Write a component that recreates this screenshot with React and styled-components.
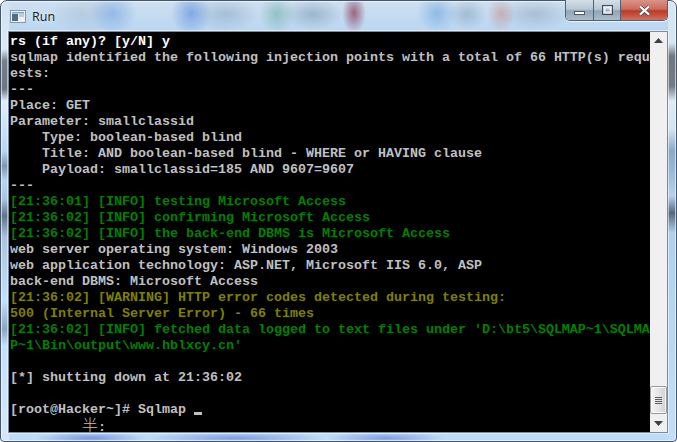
import React from "react";
import styled, { createGlobalStyle } from "styled-components";

const Global = createGlobalStyle`
  html, body {
    margin: 0;
    padding: 0;
    background: #fff;
    overflow: hidden;
  }
`;

// the desktop showing through the glass is only a few blurred smudges
const titleSmudges = `
  radial-gradient(ellipse 34px 20px at 82px 13px, rgba(120, 140, 160, 0.2), transparent),
  radial-gradient(ellipse 24px 22px at 112px 12px, rgba(80, 140, 215, 0.42), transparent),
  radial-gradient(ellipse 20px 24px at 190px 12px, rgba(60, 120, 215, 0.5), transparent),
  radial-gradient(ellipse 34px 18px at 224px 13px, rgba(110, 140, 170, 0.36), transparent),
  radial-gradient(ellipse 18px 20px at 276px 13px, rgba(90, 165, 150, 0.48), transparent),
  radial-gradient(ellipse 30px 16px at 312px 13px, rgba(100, 130, 155, 0.42), transparent),
  radial-gradient(ellipse 12px 20px at 353px 12px, rgba(130, 40, 70, 0.66), transparent),
  radial-gradient(ellipse 20px 20px at 436px 12px, rgba(70, 140, 210, 0.42), transparent),
  radial-gradient(ellipse 20px 16px at 466px 13px, rgba(100, 130, 160, 0.36), transparent),
  radial-gradient(ellipse 14px 18px at 500px 13px, rgba(200, 110, 90, 0.4), transparent),
  radial-gradient(ellipse 36px 16px at 534px 13px, rgba(110, 130, 150, 0.32), transparent)
`;

const bottomSmudges = `
  radial-gradient(ellipse 56px 6px at 90px 437px, rgba(70, 95, 205, 0.55), transparent),
  radial-gradient(ellipse 90px 6px at 235px 437px, rgba(70, 95, 205, 0.5), transparent),
  radial-gradient(ellipse 60px 6px at 385px 437px, rgba(70, 95, 205, 0.5), transparent)
`;

const leftStrip = `linear-gradient(180deg,
  #cfe2f5 0, #dce9f5 48px, #77808a 60px, #6f7880 88px, #e2eefa 100px, #b5d6f5 150px,
  #7f97ad 165px, #b8d6f3 180px, #a9c6e0 198px, #5f7488 215px, #a8c4de 236px,
  #c4e0fa 300px, #8ba6c0 328px, #c4e0fa 345px, #d5e8fa 442px)`;

const rightStrip = `linear-gradient(180deg,
  #d5e6f6 0, #d8e6f3 42px, #6f767c 55px, #747b82 85px, #dfeaf5 100px, #d5e4f2 128px,
  #8aa8c8 150px, #9ab8d8 170px, #b4d2f0 195px, #56697c 212px, #b0d0f0 232px, #c2defa 442px)`;

const Frame = styled.div`
  width: 677px;
  height: 442px;
  box-sizing: border-box;
  display: flex;
  flex-direction: column;
  padding: 0 8px 8px 7px;
  border: 1px solid #47566a;
  border-radius: 7px 7px 4px 4px;
  box-shadow: inset 0 0 0 1px rgba(255, 255, 255, 0.6);
  background:
    ${bottomSmudges},
    ${titleSmudges},
    ${leftStrip} 0 0 / 8px 100% no-repeat,
    ${rightStrip} 100% 0 / 8px 100% no-repeat,
    linear-gradient(180deg, #cfe0f0 0, #b9d6f2 30px, #bcdcfa 100%);
`;

const TitleBar = styled.div`
  height: 30px;
  flex: none;
  display: flex;
  align-items: center;
  position: relative;
`;

const AppIcon = styled.svg`
  width: 16px;
  height: 16px;
  margin: 2px 6px 0 2px;
  flex: none;
`;

const Title = styled.span`
  font: 12.5px "Open Sans", "Liberation Sans", sans-serif;
  color: #16212c;
  margin-top: 1px;
  text-shadow: 0 0 6px rgba(255, 255, 255, 0.9);
`;

const Controls = styled.div`
  position: absolute;
  top: -1px;
  right: 0;
  display: flex;
  height: 20px;
  border: 1px solid #54606d;
  border-top: none;
  border-radius: 0 0 5px 5px;
  overflow: hidden;
  box-shadow: 0 1px 0 rgba(255, 255, 255, 0.7);
`;

const ControlButton = styled.div`
  width: ${(p) => p.$w}px;
  display: flex;
  align-items: center;
  justify-content: center;
  border-left: ${(p) => (p.$first ? "none" : "1px solid #54606d")};
  background: ${(p) =>
    p.$close
      ? "linear-gradient(180deg, #d9948a 0, #cf6a5a 45%, #bb3a28 55%, #d0705c 100%)"
      : "linear-gradient(180deg, #d4dfe9 0, #b9c8d6 45%, #93a6b8 55%, #a9bccd 100%)"};
`;

const MinimizeGlyph = styled.svg`
  margin-top: 5px;
`;

const Body = styled.div`
  flex: 1;
  min-height: 0;
  display: flex;
  border: 1px solid #7d8c9b;
  outline: 1px solid rgba(255, 255, 255, 0.5);
`;

const Console = styled.div`
  flex: 1;
  min-width: 0;
  background: #000;
  padding: 2px 0 0 1px;
  overflow: hidden;
  font-family: "Liberation Mono", "Courier New", monospace;
  font-size: 13.33px;
  font-weight: 700;
  line-height: 16px;
  white-space: pre;
`;

const toneColors = {
  green: "#008000",
  yellow: "#808000",
  white: "#fff",
};

const Line = styled.div`
  height: 16px;
  color: ${(p) => toneColors[p.$tone] || "#c0c0c0"};
`;

const LastLine = styled(Line)`
  height: 14px;
  line-height: 12px;
`;

const Cjk = styled.span`
  display: inline-block;
  height: 12px;
  font-family: "Noto Sans CJK SC", sans-serif;
  font-size: 16px;
  line-height: 12px;
  font-weight: 300;
`;

const Cursor = styled.span`
  display: inline-block;
  width: 8px;
  height: 3px;
  margin-left: 8px;
  background: #c0c0c0;
  vertical-align: -2px;
`;

const ScrollBar = styled.div`
  width: 17px;
  flex: none;
  display: flex;
  flex-direction: column;
  background: #f0f0f0;
`;

const ArrowCell = styled.div`
  height: 17px;
  display: flex;
  align-items: center;
  justify-content: center;
`;

const Track = styled.div`
  flex: 1;
  display: flex;
  flex-direction: column;
  justify-content: flex-end;
`;

const Thumb = styled.div`
  height: 28px;
  box-sizing: border-box;
  margin-bottom: 1px;
  border: 1px solid #9a9a9a;
  border-radius: 2px;
  background: linear-gradient(90deg, #f4f4f4 0, #e6e6e6 50%, #cfcfcf 100%);
  box-shadow: inset 0 0 0 1px rgba(255, 255, 255, 0.8);
  display: flex;
  flex-direction: column;
  align-items: center;
  justify-content: center;
  gap: 1px;
`;

const Grip = styled.i`
  display: block;
  width: 7px;
  height: 1px;
  background: #5f5f5f;
`;

const lines = [
  ["white", "rs (if any)? [y/N] y"],
  ["", "sqlmap identified the following injection points with a total of 66 HTTP(s) requ"],
  ["", "ests:"],
  ["", "---"],
  ["", "Place: GET"],
  ["", "Parameter: smallclassid"],
  ["", "    Type: boolean-based blind"],
  ["", "    Title: AND boolean-based blind - WHERE or HAVING clause"],
  ["", "    Payload: smallclassid=185 AND 9607=9607"],
  ["", "---"],
  ["green", "[21:36:01] [INFO] testing Microsoft Access"],
  ["green", "[21:36:02] [INFO] confirming Microsoft Access"],
  ["green", "[21:36:02] [INFO] the back-end DBMS is Microsoft Access"],
  ["", "web server operating system: Windows 2003"],
  ["", "web application technology: ASP.NET, Microsoft IIS 6.0, ASP"],
  ["", "back-end DBMS: Microsoft Access"],
  ["yellow", "[21:36:02] [WARNING] HTTP error codes detected during testing:"],
  ["yellow", "500 (Internal Server Error) - 66 times"],
  ["green", "[21:36:02] [INFO] fetched data logged to text files under 'D:\\bt5\\SQLMAP~1\\SQLMA"],
  ["green", "P~1\\Bin\\output\\www.hblxcy.cn'"],
  ["", ""],
  ["", "[*] shutting down at 21:36:02"],
  ["", ""],
];

const App = () => {
  return (
    <>
      <Global />
      <Frame>
        <TitleBar>
          <AppIcon viewBox="0 0 16 16">
            <rect x="0.5" y="1.5" width="15" height="12" fill="#eef2f6" stroke="#8a96a2" />
            <rect x="2" y="3" width="12" height="1.5" fill="#7fa3c8" />
            <rect x="2" y="5" width="6" height="7" fill="#4d7080" />
            <rect x="9" y="5" width="5" height="3" fill="#c2ccd6" />
          </AppIcon>
          <Title>Run</Title>
          <Controls>
            <ControlButton $w={27} $first>
              <MinimizeGlyph width="11" height="4" viewBox="0 0 11 4">
                <rect x="0.5" y="0.5" width="10" height="3" fill="#fff" stroke="#4f5a66" />
              </MinimizeGlyph>
            </ControlButton>
            <ControlButton $w={26}>
              <svg width="11" height="10" viewBox="0 0 11 10">
                <rect x="0.5" y="0.5" width="10" height="9" fill="none" stroke="#3f4a56" />
                <rect x="2.5" y="2.5" width="6" height="5" fill="none" stroke="#e8eef4" strokeWidth="2" />
              </svg>
            </ControlButton>
            <ControlButton $w={46} $close>
              <svg width="13" height="11" viewBox="0 0 13 11">
                <path d="M2 1.5 L11 9.5 M11 1.5 L2 9.5" stroke="#4a4f55" strokeWidth="3.6" />
                <path d="M2 1.5 L11 9.5 M11 1.5 L2 9.5" stroke="#fff" strokeWidth="2.2" />
              </svg>
            </ControlButton>
          </Controls>
        </TitleBar>
        <Body>
          <Console>
            {lines.map((l, i) => (
              <Line key={i} $tone={l[0]}>
                {l[1]}
              </Line>
            ))}
            <Line>
              [root@Hacker~]# Sqlmap
              <Cursor />
            </Line>
            <LastLine>
              {"         "}
              <Cjk>半</Cjk>:
            </LastLine>
          </Console>
          <ScrollBar>
            <ArrowCell>
              <svg width="9" height="5" viewBox="0 0 9 5">
                <path d="M4.5 0 L9 5 H0 Z" fill="#404040" />
              </svg>
            </ArrowCell>
            <Track>
              <Thumb>
                <Grip />
                <Grip />
                <Grip />
                <Grip />
              </Thumb>
            </Track>
            <ArrowCell>
              <svg width="9" height="5" viewBox="0 0 9 5">
                <path d="M0 0 H9 L4.5 5 Z" fill="#404040" />
              </svg>
            </ArrowCell>
          </ScrollBar>
        </Body>
      </Frame>
    </>
  );
};

export default App;
